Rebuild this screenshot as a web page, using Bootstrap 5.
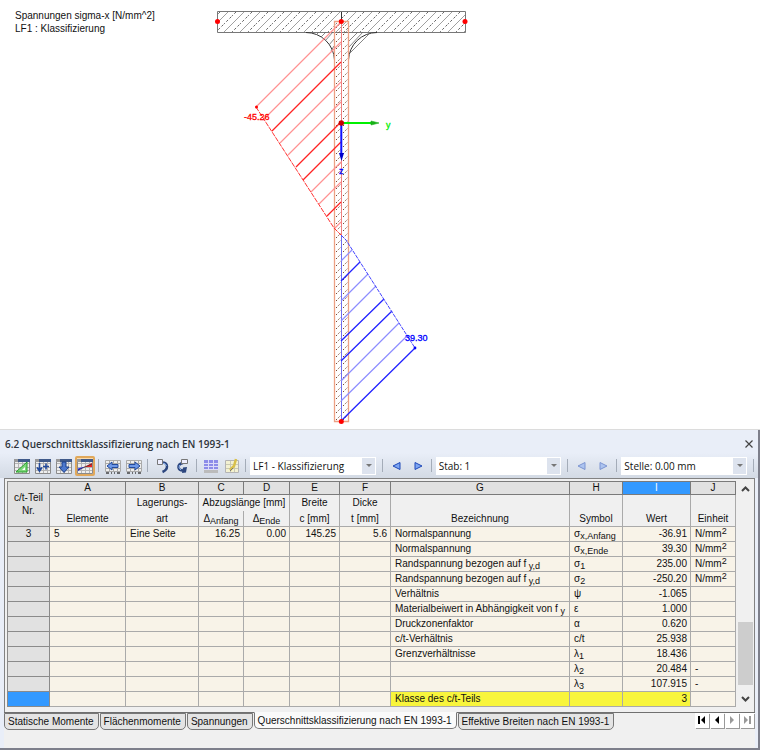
<!DOCTYPE html>
<html lang="de">
<head>
<meta charset="utf-8">
<meta name="viewport" content="width=device-width, initial-scale=1">
<title>Querschnittsklassifizierung nach EN 1993-1</title>
<link href="https://cdn.jsdelivr.net/npm/bootstrap@5.3.0/dist/css/bootstrap.min.css" rel="stylesheet">
<style>
body { font-family: "Liberation Sans", Arial, sans-serif; font-size: 10px; color: #111; background: #fff; }
.plot-caption { font-size: 10px; line-height: 13px; left: 15px; top: 9px; }
.plot svg { width: 100%; height: auto; }
.plot text { font-family: "Liberation Sans", Arial, sans-serif; font-size: 9px; stroke-width: .3px; }
.panel { background: #e9eef8; border: solid #7d7f8b; border-width: 0 2px 2px 0; box-shadow: 0 -1px 0 #dcdcdc; padding: 0 3px 0 4px; }
.panel-title { font: 600 10px/16px "Open Sans", sans-serif; color: #2f343a; padding: 6px 0 1px 1px; }
.close-btn { width: 10px; height: 14px; }
.toolbar { gap: 1px; height: 25px; padding: 0 4px 0 12px; margin: 0 -3px 0 -4px; background: linear-gradient(#e9eef8, #d3dae4); }
.tool { width: 20px; height: 20px; border: 1px solid transparent; background: none; padding: 0; display: flex; align-items: center; justify-content: center; flex: none; }
.tool.active { border: 2px solid #e0a85c; background: #fbdcae; border-radius: 2px; }
.tool:disabled { opacity: .5; }
.sep { width: 1px; height: 13px; background: #a4acb8; margin: 0 3px 0 2px; flex: none; }
.pick { flex: 1 1 0; min-width: 0; margin-right: 3px; position: relative; }
.pick select { width: 100%; height: 18px; border: 0; border-radius: 0; appearance: none; background: #fff; padding: 0 16px 0 3px; font: 10px/18px "Open Sans", sans-serif; color: #111; display: block; }
.pick i { position: absolute; right: 1px; top: 1px; width: 13px; height: 16px; background: #dde3ee; pointer-events: none; }
.pick i::after { content: ""; display: block; margin: 6px 4px; border: solid transparent; border-width: 3px 3px 0; border-top-color: #777; }
.sheet { border: 1px solid #828282; border-bottom: 0; background: #f0f0f0; padding: 2px 0 5px 2px; }
.grid { table-layout: fixed; width: 100%; border-collapse: collapse; font-size: 10px; line-height: 14px; color: #111; }
.grid th, .grid td { border: 1px solid #aaa; padding: 0 3px 0 4px; height: 15px; white-space: nowrap; overflow: hidden; font-weight: 400; line-height: 14px; }
.grid th { text-align: center; background: #f0f0f0; padding: 0; }
.grid thead .letters th { background: #e1e1e1; border: 1px solid #7a7a7a; height: 13px; line-height: 12px; }
.grid thead th.corner, .grid tbody th { background: #e1e1e1; border-color: #8a8a8a; }
.grid thead .letters th.corner { line-height: 13px; }
.grid thead .letters th.on, .grid tbody th.on { background: #3399ff; color: #fff; }
.grid .upper th { border-bottom: 0; height: 16px; }
.grid .lower th { border-top: 0; height: 15px; line-height: 15px; }
.grid td { background: #f8f3e8; }
.grid td.hit { background: #f8f53c; }
.grid td.num { text-align: right; }
.grid sub, .grid sup { font-size: 9px; line-height: 0; }
.grid sub { bottom: -2px; }
.grid sup { top: -3px; }
.scroll { width: 15px; margin: 0 1px 0 2px; flex: none; background: #f0f0f0; }
.scroll button { height: 16px; border: 0; background: none; padding: 0; display: flex; align-items: center; justify-content: center; }
.thumb { height: 63px; margin-bottom: 6px; background: #cdcdcd; }
.sheet-tabs { border-top: 1px solid #707070; background: #f0f0f0; padding-bottom: 18px; }
.sheet-tabs .tab { font-size: 10px; line-height: 15px; height: 17px; color: #111; background: #e4e4e4; border: 1px solid #777; border-radius: 0 0 5px 5px; padding: 0 4px 0 3px; margin-right: 1px; white-space: nowrap; }
.sheet-tabs .tab.active { background: #fafafa; border-top-color: #fafafa; margin-top: -1px; }
.pager { width: 14px; height: 15px; margin-right: 1px; border: 0; background: #fff; box-shadow: 1px 1px 0 #999; padding: 0; display: flex; align-items: center; justify-content: center; }
</style>
<script src="https://cdn.jsdelivr.net/npm/bootstrap@5.3.0/dist/js/bootstrap.bundle.min.js"></script>
</head>
<body>
<main>
<section class="plot position-relative">
  <div class="plot-caption position-absolute">Spannungen sigma-x [N/mm^2]<br>LF1 : Klassifizierung</div>
  <svg class="d-block" viewBox="0 0 760 430" role="img" aria-label="Spannungsverlauf am T-Querschnitt">
    <defs>
      <pattern id="hatch" width="16" height="16" patternUnits="userSpaceOnUse">
        <path d="M-1 17 17 -1M-1 1 1 -1M15 17 17 15" stroke="#888" stroke-width=".8"/>
        <path d="M-1 9 9 -1M7 17 17 7" stroke="#555" stroke-width=".9" stroke-dasharray="2.6 2"/>
      </pattern>
      <pattern id="hatchWeb" width="7" height="7" patternUnits="userSpaceOnUse">
        <path d="M0 7 7 0" stroke="#7a4a34" stroke-width="1" stroke-dasharray="1.6 1.7"/>
      </pattern>
    </defs>
    <path d="M217.500 11.500H465.500V32.500H217.500Z" fill="url(#hatch)" stroke="#777"/>
    <path d="M341.500 12V32" stroke="#333"/>
    <path d="M306 32.500A28.500 28.500 0 0 1 334.500 60M377 32.500A28.500 28.500 0 0 0 348.500 60" fill="none" stroke="#333"/>
    <path d="M319 32 316 35M326 32 321 37M333 32 325 41M334 39 329 45M334 46 331 51M358 32 349 41M363 32 349 47M371 32 350 53" stroke="#666" stroke-width=".8" fill="none"/>
    <path d="M334.500 21.500H348.500V421.500H334.500Z" fill="url(#hatchWeb)" stroke="#eda184" stroke-width="1.300"/>
    <path d="M341.500 22V235" stroke="#f08080"/>
    <path d="M341.500 235V421" stroke="#6d6df0"/>
    <path d="M341 22 256 107M341 42 264 119M341 82 280 143M341 102 288 155M341 162 311 192M341 182 319 204M341 222 334 229" stroke="#ff9292" stroke-width="1.200"/>
    <path d="M341 62 272 131M341 122 296 167M341 142 303 180M341 202 327 216" stroke="#f22" stroke-width="1.300"/>
    <path d="M256 107 334 228 341 235" fill="none" stroke="#f33" stroke-dasharray="5 1"/>
    <path d="M341 261 352 250M341 301 368 274M341 321 376 286M341 381 399 323M341 401 407 336" stroke="#8d8dff" stroke-width="1.200"/>
    <path d="M341 281 360 262M341 341 384 299M341 361 392 311M341 421 415 348" stroke="#22f" stroke-width="1.300"/>
    <path d="M341 235 346 240 415 348" fill="none" stroke="#44f" stroke-dasharray="4 1"/>
    <path d="M341 123H373" stroke="#00f000" stroke-width="2"/><path d="M371 121 379 123 371 125Z" fill="#18b018" stroke="#18b018" stroke-width=".6"/>
    <path d="M341.300 123V156" stroke="#11f" stroke-width="2"/><path d="M339 153H344L341.500 161Z" fill="#00c"/>
    <g fill="#f00"><circle cx="217.500" cy="21.500" r="2.500"/><circle cx="465" cy="21.500" r="2.500"/><circle cx="341.300" cy="21.500" r="2.500"/><circle cx="341.300" cy="421.500" r="2.500"/><circle cx="256.500" cy="107" r="1.500"/></g>
    <circle cx="341.300" cy="123" r="2.700" fill="#c80000"/><circle cx="415" cy="348" r="1.400" fill="#00f"/>
    <text x="244" y="120" fill="#f00" stroke="#f00">-45.26</text>
    <text x="405" y="341" fill="#00f" stroke="#00f">39.30</text>
    <text x="386" y="128" fill="#0e0" stroke="#0e0">y</text>
    <text x="339" y="174" fill="#00f" stroke="#00f">z</text>
  </svg>
</section>

<section class="panel">
  <header class="d-flex justify-content-between align-items-center panel-title">
    <span>6.2 Querschnittsklassifizierung nach EN 1993-1</span>
    <button class="close-btn border-0 bg-transparent p-0 d-flex align-items-center" aria-label="Schließen"><svg width="8" height="8" viewBox="0 0 8 8"><path d="M.5.5 7.500 7.500M7.500.5.5 7.500" stroke="#444" stroke-width="1.200"/></svg></button>
  </header>
  <svg width="0" height="0" class="position-absolute" aria-hidden="true">
    <symbol id="sheetIcon" viewBox="0 0 16 16"><path d="M.5 1.500H15.500V15.500H.5Z" fill="#eee" stroke="#8b8b8b"/><path d="M1 5.500H15M1 9.500H15M1 12.500H15M4.500 2V15M8.500 2V15M12.500 2V15" stroke="#b4b4b4"/><path d="M0 1H16V4H0Z" fill="#405a8a"/><path d="M0 1H4V4H0Z" fill="#9a9a9a"/></symbol>
    <symbol id="wideIcon" viewBox="0 0 16 16"><path d="M.5 2.500H15.500V13.500H.5Z" fill="#eee" stroke="#aaa"/><path d="M0 5.500H16M0 10.500H16M4.500 2V14M8.500 2V14M12.500 2V14" stroke="#aaa"/><path d="M1 15H4M6 15H7M9 15H10M12 15H15" stroke="#444" stroke-width="1.500"/></symbol>
    <symbol id="prev" viewBox="0 0 10 10"><path d="M1 5 8 1.500V8.500Z" fill="#7da5f2" stroke="#1e48b8"/></symbol>
    <symbol id="next" viewBox="0 0 10 10"><path d="M9 5 2 1.500V8.500Z" fill="#7da5f2" stroke="#1e48b8"/></symbol>
  </svg>
  <div class="toolbar d-flex align-items-center" role="toolbar" aria-label="Tabelle">
    <button class="tool" aria-label="Querschnitt"><svg width="16" height="16"><use href="#sheetIcon"/><path d="M2 14H13V4Z" fill="#7ed67a" stroke="#27a02b"/><path d="M8 12H11V9Z" fill="#fff"/></svg></button>
    <button class="tool" aria-label="Zeile einfügen"><svg width="16" height="16"><use href="#sheetIcon"/><path d="M4.500 5V12M2 9.500 4.500 13 7 9.500M8 8.500H14M11 5.500V11.500" fill="none" stroke="#234a9c" stroke-width="1.600"/></svg></button>
    <button class="tool" aria-label="Nach unten"><svg width="16" height="16"><use href="#sheetIcon"/><path d="M6 4H10V9H13L8 14.500 3 9H6Z" fill="#4c78ce" stroke="#1b3e88"/></svg></button>
    <button class="tool active" aria-label="Verlauf"><svg width="16" height="16"><use href="#sheetIcon"/><path d="M1 13V10.500L8 8.500Z" fill="#22f"/><path d="M7 9 15 5V9Z" fill="#e22"/><path d="M1 12 15 6" stroke="#333" stroke-width=".7"/></svg></button>
    <span class="sep"></span>
    <button class="tool" aria-label="Vorherige Tabelle"><svg width="16" height="16"><use href="#wideIcon"/><path d="M2 8 7 4V6.500H13V9.500H7V12Z" fill="#6d98e8" stroke="#234a9c"/></svg></button>
    <button class="tool" aria-label="Nächste Tabelle"><svg width="16" height="16"><use href="#wideIcon"/><path d="M14 8 9 4V6.500H3V9.500H9V12Z" fill="#6d98e8" stroke="#234a9c"/></svg></button>
    <span class="sep"></span>
    <button class="tool" aria-label="Rückgängig"><svg width="16" height="16"><path d="M7 4.500Q13 4 13 8.500 13 12 8.500 14" fill="none" stroke="#2c467f" stroke-width="2.500"/><path d="M8 5Q12 5 12.500 8" fill="none" stroke="#8db2ec"/><path d="M3.500 1.500H8.500V6.500H3.500Z" fill="#eef" stroke="#777"/></svg></button>
    <button class="tool" aria-label="Wiederholen"><svg width="16" height="16"><path d="M8 5Q3 6 3.500 9.500 4 12.500 8 12.500" fill="none" stroke="#2c467f" stroke-width="2.500"/><path d="M8 9.500 12 9 11 14.500 7 15Z" fill="#2c467f"/><path d="M4.500 7Q3 10 6 12" fill="none" stroke="#8db2ec"/><path d="M6.500 1.500H12.500V5.500H6.500Z" fill="#eef" stroke="#777"/></svg></button>
    <span class="sep"></span>
    <button class="tool" aria-label="Zeilen"><svg width="16" height="16"><path d="M1 2H15V14H1Z" fill="#8c8ce8"/><path d="M1 5.500H15M1 8.500H15M1 11.500H15M5.500 2V14M10.500 2V14" stroke="#dcdcf8"/><path d="M1 12H15V15H1Z" fill="#bbb"/></svg></button>
    <button class="tool" aria-label="Bearbeiten"><svg width="16" height="16"><path d="M1.500 2.500H14.500V14.500H1.500Z" fill="#f3f1d2" stroke="#b4b4b4"/><path d="M2 6.500H14M2 10.500H14M6.500 3V14M10.500 3V14" stroke="#c9c9b4"/><path d="M12 1 10 8 6 12" fill="none" stroke="#d8c04a" stroke-width="2.500"/><path d="M9 10 6 13" stroke="#777"/></svg></button>
    <span class="sep"></span>
    <div class="pick"><select aria-label="Lastfall"><option>LF1 - Klassifizierung</option></select><i></i></div>
    <span class="sep"></span>
    <button class="tool" aria-label="Voriger Lastfall"><svg width="10" height="10"><use href="#prev"/></svg></button>
    <button class="tool" aria-label="Nächster Lastfall"><svg width="10" height="10"><use href="#next"/></svg></button>
    <span class="sep"></span>
    <div class="pick"><select aria-label="Stab"><option>Stab: 1</option></select><i></i></div>
    <span class="sep"></span>
    <button class="tool" disabled aria-label="Vorige Stelle"><svg width="10" height="10"><use href="#prev"/></svg></button>
    <button class="tool" disabled aria-label="Nächste Stelle"><svg width="10" height="10"><use href="#next"/></svg></button>
    <span class="sep"></span>
    <div class="pick"><select aria-label="Stelle"><option>Stelle: 0.00 mm</option></select><i></i></div>
    <span class="sep me-0"></span>
  </div>

  <div class="sheet d-flex">
    <div class="flex-grow-1">
    <table class="grid">
      <colgroup><col style="width:42px"><col style="width:76px"><col style="width:73px"><col style="width:45px"><col style="width:46px"><col style="width:50px"><col style="width:51px"><col><col style="width:53px"><col style="width:68px"><col style="width:45px"></colgroup>
      <thead>
        <tr class="letters"><th class="corner" rowspan="3">c/t-Teil<br>Nr.</th><th>A</th><th>B</th><th>C</th><th>D</th><th>E</th><th>F</th><th>G</th><th>H</th><th class="on">I</th><th>J</th></tr>
        <tr class="upper"><th></th><th>Lagerungs-</th><th colspan="2">Abzugslänge [mm]</th><th>Breite</th><th>Dicke</th><th></th><th></th><th></th><th></th></tr>
        <tr class="lower"><th>Elemente</th><th>art</th><th>Δ<sub>Anfang</sub></th><th>Δ<sub>Ende</sub></th><th>c [mm]</th><th>t [mm]</th><th>Bezeichnung</th><th>Symbol</th><th>Wert</th><th>Einheit</th></tr>
      </thead>
      <tbody>
        <tr><th>3</th><td>5</td><td>Eine Seite</td><td class="num">16.25</td><td class="num">0.00</td><td class="num">145.25</td><td class="num">5.6</td><td>Normalspannung</td><td>σ<sub>x,Anfang</sub></td><td class="num">-36.91</td><td>N/mm<sup>2</sup></td></tr>
        <tr><th></th><td></td><td></td><td></td><td></td><td></td><td></td><td>Normalspannung</td><td>σ<sub>x,Ende</sub></td><td class="num">39.30</td><td>N/mm<sup>2</sup></td></tr>
        <tr><th></th><td></td><td></td><td></td><td></td><td></td><td></td><td>Randspannung bezogen auf f<sub> y,d</sub></td><td>σ<sub>1</sub></td><td class="num">235.00</td><td>N/mm<sup>2</sup></td></tr>
        <tr><th></th><td></td><td></td><td></td><td></td><td></td><td></td><td>Randspannung bezogen auf f<sub> y,d</sub></td><td>σ<sub>2</sub></td><td class="num">-250.20</td><td>N/mm<sup>2</sup></td></tr>
        <tr><th></th><td></td><td></td><td></td><td></td><td></td><td></td><td>Verhältnis</td><td>ψ</td><td class="num">-1.065</td><td></td></tr>
        <tr><th></th><td></td><td></td><td></td><td></td><td></td><td></td><td>Materialbeiwert in Abhängigkeit von f<sub> y</sub></td><td>ε</td><td class="num">1.000</td><td></td></tr>
        <tr><th></th><td></td><td></td><td></td><td></td><td></td><td></td><td>Druckzonenfaktor</td><td>α</td><td class="num">0.620</td><td></td></tr>
        <tr><th></th><td></td><td></td><td></td><td></td><td></td><td></td><td>c/t-Verhältnis</td><td>c/t</td><td class="num">25.938</td><td></td></tr>
        <tr><th></th><td></td><td></td><td></td><td></td><td></td><td></td><td>Grenzverhältnisse</td><td>λ<sub>1</sub></td><td class="num">18.436</td><td></td></tr>
        <tr><th></th><td></td><td></td><td></td><td></td><td></td><td></td><td></td><td>λ<sub>2</sub></td><td class="num">20.484</td><td>-</td></tr>
        <tr><th></th><td></td><td></td><td></td><td></td><td></td><td></td><td></td><td>λ<sub>3</sub></td><td class="num">107.915</td><td>-</td></tr>
        <tr><th class="on"></th><td></td><td></td><td></td><td></td><td></td><td></td><td class="hit">Klasse des c/t-Teils</td><td class="hit"></td><td class="hit num">3</td><td></td></tr>
      </tbody>
    </table>
    </div>
    <div class="scroll d-flex flex-column">
      <button aria-label="Nach oben"><svg width="9" height="6"><path d="M1 5 4.500 1.500 8 5" fill="none" stroke="#444" stroke-width="2"/></svg></button>
      <div class="flex-grow-1"></div>
      <div class="thumb"></div>
      <button aria-label="Nach unten blättern"><svg width="9" height="6"><path d="M1 1 4.500 4.500 8 1" fill="none" stroke="#444" stroke-width="2"/></svg></button>
    </div>
  </div>

  <nav class="sheet-tabs d-flex align-items-start" aria-label="Tabellen">
    <button class="tab">Statische Momente</button>
    <button class="tab">Flächenmomente</button>
    <button class="tab">Spannungen</button>
    <button class="tab active" aria-current="page">Querschnittsklassifizierung nach EN 1993-1</button>
    <button class="tab">Effektive Breiten nach EN 1993-1</button>
    <div class="d-flex ms-auto">
      <button class="pager" aria-label="Erste"><svg width="10" height="8"><path d="M1 0H3V8H1ZM8 0V8L4 4Z" fill="#000"/></svg></button>
      <button class="pager" aria-label="Zurück"><svg width="8" height="8"><path d="M6 0V8L2 4Z" fill="#000"/></svg></button>
      <button class="pager" aria-label="Weiter" disabled><svg width="8" height="8"><path d="M2 0V8L6 4Z" fill="#999"/></svg></button>
      <button class="pager" aria-label="Letzte" disabled><svg width="10" height="8"><path d="M7 0H9V8H7ZM2 0V8L6 4Z" fill="#999"/></svg></button>
    </div>
  </nav>
</section>
</main>
</body>
</html>
